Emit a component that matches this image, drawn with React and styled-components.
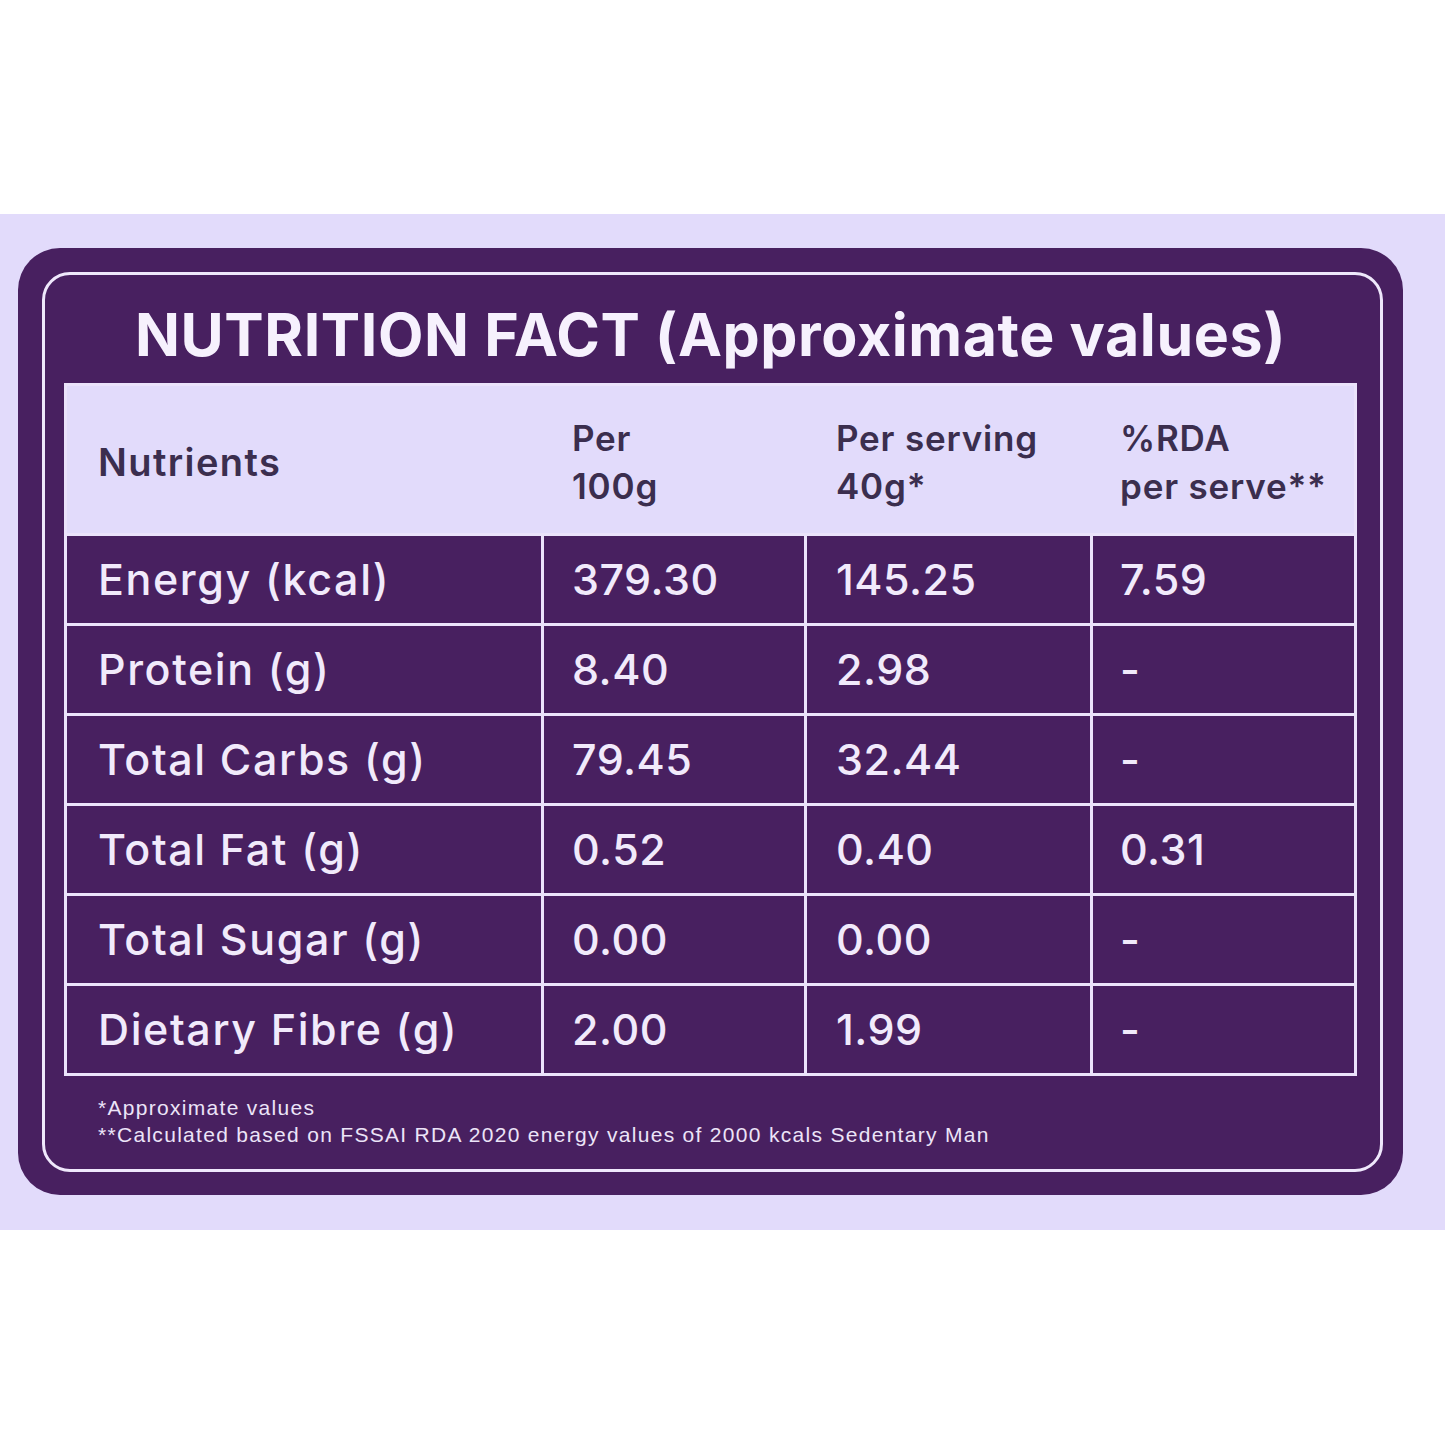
import React from 'react';
import styled, { createGlobalStyle } from 'styled-components';

const GlobalStyle = createGlobalStyle`
  html, body {
    margin: 0;
    padding: 0;
    background: #ffffff;
  }
  body {
    font-family: Inter, "Noto Sans", sans-serif;
  }
`;

const Page = styled.div`
  width: 1445px;
  height: 1445px;
  padding-top: 214px;
  box-sizing: border-box;
  background: #ffffff;
`;

const Band = styled.section`
  height: 1016px;
  background: #e2dbfb;
  padding: 34px 42px 0 18px;
  box-sizing: border-box;
`;

const Card = styled.div`
  height: 947px;
  background: #482060;
  border-radius: 42px;
  padding: 24px 20px 23px 24px;
  box-sizing: border-box;
`;

const Frame = styled.div`
  height: 100%;
  border: 3px solid #efe8fc;
  border-radius: 28px;
  box-sizing: border-box;
  padding: 0 23px 0 19px;
  display: flex;
  flex-direction: column;
`;

const Title = styled.h1`
  margin: 0;
  height: 108px;
  display: flex;
  align-items: center;
  justify-content: center;
  padding-top: 10px;
  box-sizing: border-box;
  color: #f6f1fd;
  font-family: Inter, sans-serif;
  font-weight: 700;
  font-size: 59px;
  letter-spacing: 0.6px;
`;

const Table = styled.div`
  border: 3px solid #ebe3fb;
  background: #ebe3fb;
  display: flex;
  flex-direction: column;
  gap: 3px;
`;

const columns = '474px 260px 283px 261px';

const HeadRow = styled.div`
  display: grid;
  grid-template-columns: ${columns};
  column-gap: 3px;
  height: 147px;
  background: #e2dbfb;
`;

const HeadCell = styled.div`
  display: flex;
  align-items: center;
  padding-left: ${p => p.$pad}px;
  padding-top: 4px;
  color: #3b2e4e;
  font-size: ${p => (p.$big ? 38 : 35)}px;
  font-weight: 600;
  line-height: 48px;
  letter-spacing: ${p => (p.$big ? 1.4 : 0.8)}px;
  white-space: pre-line;
`;

const Row = styled.div`
  display: grid;
  grid-template-columns: ${columns};
  column-gap: 3px;
  height: 87px;
`;

const Cell = styled.div`
  display: flex;
  align-items: center;
  background: #482060;
  padding-left: ${p => p.$pad}px;
  padding-bottom: 2px;
  box-sizing: border-box;
  color: #f1eafb;
  font-size: 43px;
  font-weight: 500;
  letter-spacing: ${p => (p.$label ? 1.6 : 0.5)}px;
`;

const Notes = styled.div`
  padding: 18px 0 0 34px;
  color: #ece4f8;
  font-family: "Liberation Sans", Arial, sans-serif;
  font-size: 21px;
  line-height: 27px;
  letter-spacing: 1.3px;
`;

const pads = [31, 28, 29, 27];

const head = ['Nutrients', 'Per\n100g', 'Per serving\n40g*', '%RDA\nper serve**'];

const rows = [
  ['Energy (kcal)', '379.30', '145.25', '7.59'],
  ['Protein (g)', '8.40', '2.98', '-'],
  ['Total Carbs (g)', '79.45', '32.44', '-'],
  ['Total Fat (g)', '0.52', '0.40', '0.31'],
  ['Total Sugar (g)', '0.00', '0.00', '-'],
  ['Dietary Fibre (g)', '2.00', '1.99', '-'],
];

export default function App() {
  return (
    <>
      <GlobalStyle />
      <Page>
        <Band>
          <Card>
            <Frame>
              <Title>NUTRITION FACT (Approximate values)</Title>
              <Table>
                <HeadRow>
                  {head.map((h, i) => (
                    <HeadCell key={i} $pad={pads[i]} $big={i === 0}>{h}</HeadCell>
                  ))}
                </HeadRow>
                {rows.map((r, ri) => (
                  <Row key={ri}>
                    {r.map((c, ci) => (
                      <Cell key={ci} $pad={pads[ci]} $label={ci === 0}>{c}</Cell>
                    ))}
                  </Row>
                ))}
              </Table>
              <Notes>
                <div>*Approximate values</div>
                <div>**Calculated based on FSSAI RDA 2020 energy values of 2000 kcals Sedentary Man</div>
              </Notes>
            </Frame>
          </Card>
        </Band>
      </Page>
    </>
  );
}
